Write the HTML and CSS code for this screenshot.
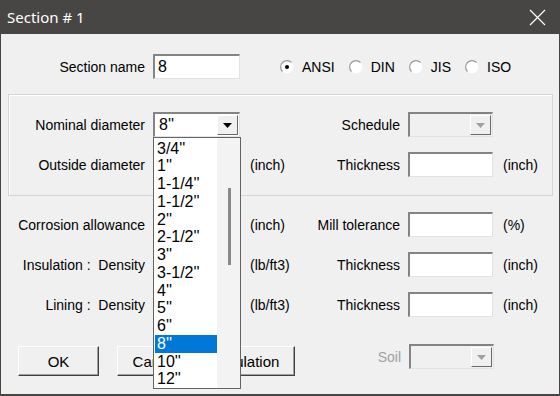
FILE: index.html
```html
<!DOCTYPE html>
<html lang="en">
<head>
  <meta charset="UTF-8" />
  <title>Section # 1</title>
  <link rel="stylesheet" href="styles.css">
</head>
<body>
  <div class="window">
    <div class="titlebar">
      <span class="title">Section # 1</span>
      <svg class="close" width="17" height="17" viewBox="0 0 17 17">
        <path d="M1 1 L16 16 M16 1 L1 16" stroke="#fff" stroke-width="1.2" fill="none"/>
      </svg>
    </div>

    <div class="client">
      <div class="row first">
        <label class="lbl">Section name</label>
        <div class="edit">8</div>
        <div class="radios">
          <span class="radio">
            <svg width="14" height="14" viewBox="0 0 14 14">
              <circle cx="7" cy="7" r="6.3" fill="#fff"/>
              <path d="M2.5 11.5 A6.3 6.3 0 0 1 11.5 2.5" stroke="#9a9a9a" stroke-width="1.2" fill="none"/>
              <circle cx="7" cy="7" r="2" fill="#000"/>
            </svg>ANSI</span>
          <span class="radio">
            <svg width="14" height="14" viewBox="0 0 14 14">
              <circle cx="7" cy="7" r="6.3" fill="#fff"/>
              <path d="M2.5 11.5 A6.3 6.3 0 0 1 11.5 2.5" stroke="#9a9a9a" stroke-width="1.2" fill="none"/>
            </svg>DIN</span>
          <span class="radio">
            <svg width="14" height="14" viewBox="0 0 14 14">
              <circle cx="7" cy="7" r="6.3" fill="#fff"/>
              <path d="M2.5 11.5 A6.3 6.3 0 0 1 11.5 2.5" stroke="#9a9a9a" stroke-width="1.2" fill="none"/>
            </svg>JIS</span>
          <span class="radio">
            <svg width="14" height="14" viewBox="0 0 14 14">
              <circle cx="7" cy="7" r="6.3" fill="#fff"/>
              <path d="M2.5 11.5 A6.3 6.3 0 0 1 11.5 2.5" stroke="#9a9a9a" stroke-width="1.2" fill="none"/>
            </svg>ISO</span>
        </div>
      </div>

      <div class="group">
        <div class="row">
          <label class="lbl">Nominal diameter</label>
          <div class="combo">
            <span class="combo-text">8''</span>
            <span class="combo-btn"><svg width="9" height="5" viewBox="0 0 9 5"><path d="M0 0 H9 L4.5 5 Z" fill="#000"/></svg></span>
            <div class="drop-list">
              <div class="items">
                <div class="item">3/4''</div>
                <div class="item">1''</div>
                <div class="item">1-1/4''</div>
                <div class="item">1-1/2''</div>
                <div class="item">2''</div>
                <div class="item">2-1/2''</div>
                <div class="item">3''</div>
                <div class="item">3-1/2''</div>
                <div class="item">4''</div>
                <div class="item">5''</div>
                <div class="item">6''</div>
                <div class="item sel">8''</div>
                <div class="item">10''</div>
                <div class="item">12''</div>
              </div>
              <div class="scroll"><span class="thumb"></span></div>
            </div>
          </div>
          <div class="mid"><span></span><label>Schedule</label></div>
          <div class="combo disabled">
            <span class="combo-text"></span>
            <span class="combo-btn"><svg width="9" height="5" viewBox="0 0 9 5"><path d="M0 0 H9 L4.5 5 Z" fill="#a0a0a0"/></svg></span>
          </div>
          <span></span>
        </div>
        <div class="row">
          <label class="lbl">Outside diameter</label>
          <div class="edit"></div>
          <div class="mid"><span class="unit">(inch)</span><label>Thickness</label></div>
          <div class="edit"></div>
          <span class="unit">(inch)</span>
        </div>
      </div>

      <div class="rows">
        <div class="row">
          <label class="lbl">Corrosion allowance</label>
          <div class="edit"></div>
          <div class="mid"><span class="unit">(inch)</span><label>Mill tolerance</label></div>
          <div class="edit"></div>
          <span class="unit">(%)</span>
        </div>
        <div class="row">
          <label class="lbl">Insulation :&nbsp; Density</label>
          <div class="edit"></div>
          <div class="mid"><span class="unit">(lb/ft3)</span><label>Thickness</label></div>
          <div class="edit"></div>
          <span class="unit">(inch)</span>
        </div>
        <div class="row">
          <label class="lbl">Lining :&nbsp; Density</label>
          <div class="edit"></div>
          <div class="mid"><span class="unit">(lb/ft3)</span><label>Thickness</label></div>
          <div class="edit"></div>
          <span class="unit">(inch)</span>
        </div>
      </div>

      <div class="btn-row">
        <button class="btn ok">OK</button>
        <button class="btn calc">Cancel the calculation</button>
        <div class="soil">
          <label class="soil-lbl">Soil</label>
          <div class="combo disabled">
            <span class="combo-text"></span>
            <span class="combo-btn"><svg width="9" height="5" viewBox="0 0 9 5"><path d="M0 0 H9 L4.5 5 Z" fill="#a0a0a0"/></svg></span>
          </div>
        </div>
      </div>
    </div>
  </div>
</body>
</html>
```

FILE: styles.css
```css
body {
  margin: 0;
  background: #f0f0f0;
  font-family: 'Liberation Sans', Arial, sans-serif;
  font-size: 14px;
  color: #000;
}
.window {
  width: 560px;
  height: 396px;
  display: flex;
  flex-direction: column;
  overflow: hidden;
}
.titlebar {
  height: 34px;
  flex: none;
  background: #484644;
  color: #fff;
  display: flex;
  align-items: center;
  justify-content: space-between;
  padding: 0 14px 0 7px;
  font-family: 'Noto Sans', 'Liberation Sans', sans-serif;
  font-size: 15px;
}
.client {
  flex: 1;
  background: #f0f0f0;
  border: 1px solid #484644;
  border-top: none;
  border-bottom-width: 2px;
}

/* rows share one set of columns */
.row {
  --c1: 144px;
  display: grid;
  grid-template-columns: var(--c1) 87px 152px 85px auto;
  column-gap: 8px;
  align-items: center;
  height: 25px;
}
.row + .row {
  margin-top: 15px;
}
.row.first {
  margin-top: 20px;
  grid-template-columns: var(--c1) 87px auto;
}
.lbl {
  text-align: right;
  white-space: nowrap;
}
.mid {
  display: flex;
  justify-content: space-between;
  white-space: nowrap;
}
.unit {
  margin-left: 2px;
  white-space: nowrap;
}

.radios {
  display: flex;
  gap: 14px;
  margin-left: 32px;
}
.radio {
  display: flex;
  align-items: center;
  gap: 8px;
}

.group {
  margin: 15px 6px 0 7px;
  border: 1px solid #d5d5d5;
  box-shadow: inset 1px 1px 0 #fff;
  padding: 17px 0 18px;
}
.group .row {
  --c1: 136px;
}
.rows {
  margin-top: 16px;
}

.edit {
  height: 25px;
  box-sizing: border-box;
  background: #fff;
  border-style: solid;
  border-width: 2px 1px 1px 2px;
  border-color: #848484 #e3e3e3 #e3e3e3 #848484;
  font-size: 16px;
  line-height: 21px;
  padding-left: 3px;
}

.combo {
  position: relative;
  height: 25px;
  box-sizing: border-box;
  background: #fff;
  border-style: solid;
  border-width: 2px 1px 1px 2px;
  border-color: #848484 #e3e3e3 #e3e3e3 #848484;
  display: flex;
  font-size: 16px;
}
.combo.disabled {
  background: #f0f0f0;
}
.combo-text {
  flex: 1;
  padding-left: 4px;
  line-height: 21px;
}
.combo-btn {
  width: 21px;
  margin: 1px 1px 1px 0;
  box-sizing: border-box;
  background: #f0f0f0;
  border-style: solid;
  border-width: 1px;
  border-color: #fff #6a6a6a #6a6a6a #fff;
  display: flex;
  align-items: center;
  justify-content: center;
}

/* open list of the nominal diameter combo */
.drop-list {
  position: absolute;
  left: -2px;
  top: 23px;
  width: 88px;
  height: 252px;
  box-sizing: border-box;
  border: 1px solid #646464;
  background: #fff;
  z-index: 5;
  display: flex;
}
.items {
  width: 62px;
  margin-left: 1px;
  padding-top: 1.5px;
}
.item {
  height: 17.75px;
  line-height: 17.75px;
  padding-left: 2px;
  font-size: 16px;
  white-space: nowrap;
}
.item.sel {
  background: #0078d7;
  color: #fff;
}
.scroll {
  flex: 1;
  background: #f3f3f3;
  position: relative;
}
.thumb {
  position: absolute;
  left: 11px;
  top: 50px;
  width: 3px;
  height: 77px;
  background: #8a8a8a;
}

.btn-row {
  margin-top: 27px;
  display: flex;
  align-items: flex-start;
}
.btn {
  height: 30px;
  margin-top: 2px;
  background: #f0f0f0;
  border: 1px solid;
  border-color: #fff #404040 #404040 #fff;
  box-shadow: inset -1px -1px 0 #a0a0a0;
  font-family: inherit;
  font-size: 15px;
  padding: 0;
  color: #000;
  white-space: nowrap;
}
.btn.ok {
  width: 81px;
  margin-left: 17px;
}
.btn.calc {
  width: 178px;
  margin-left: 18px;
}
.soil {
  margin-left: auto;
  margin-right: 65px;
  display: flex;
  align-items: center;
  gap: 8px;
}
.soil .combo {
  width: 85px;
}
.soil-lbl {
  color: #a0a0a0;
}
```
